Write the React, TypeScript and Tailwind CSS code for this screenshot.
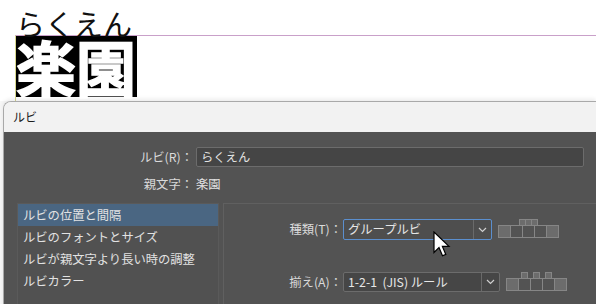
import React from "react";

const jp = { fontFamily: '"Noto Sans CJK JP", "Noto Sans", sans-serif' };

function Chevron() {
  return (
    <svg width="9" height="6" viewBox="0 0 9 6" className="block">
      <path d="M1 1 L4.5 4.5 L8 1" fill="none" stroke="#cfcfcf" strokeWidth="1.2" />
    </svg>
  );
}

function Box({ filled }: { filled?: boolean }) {
  return (
    <div
      className={`w-[13px] h-[13px] border border-[#868686] -ml-px first:ml-0 ${
        filled ? "bg-[#6c6c6c]" : "bg-[#535353]"
      }`}
    />
  );
}

function Small() {
  return <div className="w-[7px] h-[7px] border border-[#868686] bg-[#6c6c6c] -ml-px first:ml-0" />;
}

function GroupIcon() {
  return (
    <div className="flex flex-col">
      <div className="flex justify-center -mb-px">
        <Small />
        <Small />
        <Small />
      </div>
      <div className="flex">
        <Box filled />
        <Box />
        <Box />
        <Box />
        <Box filled />
      </div>
    </div>
  );
}

function JisIcon() {
  return (
    <div className="flex flex-col">
      <div className="flex pl-[15px] gap-[5px] -mb-px">
        <div className="w-[7px] h-[7px] border border-[#868686] bg-[#6c6c6c]" />
        <div className="w-[7px] h-[7px] border border-[#868686] bg-[#6c6c6c]" />
        <div className="w-[7px] h-[7px] border border-[#868686] bg-[#6c6c6c]" />
      </div>
      <div className="flex">
        <Box filled />
        <Box />
        <Box />
        <Box />
        <Box filled />
      </div>
    </div>
  );
}

export default function App() {
  const items = ["ルビの位置と間隔", "ルビのフォントとサイズ", "ルビが親文字より長い時の調整", "ルビカラー"];
  return (
    <div className="w-[596px] h-[304px] overflow-hidden bg-white relative" style={jp}>
      {/* Top document area */}
      <div className="h-[101px] bg-white">
        <div className="h-[35px] pl-[16px] flex items-end text-[29px] leading-[0.84] text-[#111]">
          らくえん
        </div>
        <div className="ml-[15px] h-[66px] border-t border-t-[#c9a0c9] border-l border-l-[#d8d890]">
          <div className="w-[121px] h-[61px] bg-black flex items-center text-white font-bold text-[60px] leading-none [-webkit-text-stroke:1.5px_white]">
            <span className="-mt-[2px]">楽園</span>
          </div>
        </div>
      </div>

      {/* Dialog */}
      <div className="pl-[3px] bg-[#f7f7f7]">
        <div className="rounded-tl-[8px] border-t border-l border-[#a9a9a9] overflow-hidden shadow-[0_-2px_4px_rgba(0,0,0,0.08)]">
          <div className="h-[30px] bg-[#f2f2f2] flex items-center pl-[9px] text-[12px] text-[#1b1b1b]">
            ルビ
          </div>
          <div className="bg-[#535353] h-[180px] text-[12.3px] text-[#dadada] pt-[15px]">
            <div className="flex items-center h-[20px]">
              <div className="w-[189px] text-right">ルビ(R)：</div>
              <div className="ml-[3px] w-[388px] h-[20px] bg-[#454545] border border-[#6c6c6c] rounded-[2px] flex items-center pl-[4px] text-[#e4e4e4]">
                らくえん
              </div>
            </div>
            <div className="flex items-center h-[20px] mt-[7px]">
              <div className="w-[189px] text-right">親文字：</div>
              <div className="ml-[3px] text-[#e4e4e4]">楽園</div>
            </div>
            <div className="flex mt-[9px] gap-[4px]">
              <div className="ml-[13px] w-[202px] h-[110px] border border-[#5a5a5a] bg-[#515151]">
                {items.map((t, i) => (
                  <div
                    key={t}
                    className={`h-[22px] flex items-center pl-[5px] text-[#e2e2e2] ${
                      i === 0 ? "bg-[#4a6682]" : ""
                    }`}
                  >
                    {t}
                  </div>
                ))}
              </div>
              <div className="flex-1 h-[110px] border-t border-l border-[#606060] pt-[15px]">
                <div className="flex items-center">
                  <div className="w-[118px] text-right">種類(T)：</div>
                  <div className="ml-[1px] w-[149px] h-[21px] border border-[#5b8fcf] rounded-[2px] bg-[#4e4e4e] flex">
                    <div className="flex-1 flex items-center pl-[4px] text-[#e6e6e6]">グループルビ</div>
                    <div className="w-[18px] border-l border-[#6a6a6a] flex items-center justify-center">
                      <Chevron />
                    </div>
                  </div>
                  <div className="ml-[6px] self-start">
                    <GroupIcon />
                  </div>
                </div>
                <div className="flex items-center mt-[32px]">
                  <div className="w-[118px] text-right">揃え(A)：</div>
                  <div className="ml-[1px] w-[157px] h-[20px] border border-[#6c6c6c] rounded-[2px] bg-[#464646] flex">
                    <div className="flex-1 flex items-center pl-[4px] text-[#e6e6e6] whitespace-pre">1-2-1  (JIS) ルール</div>
                    <div className="w-[18px] border-l border-[#6a6a6a] flex items-center justify-center">
                      <Chevron />
                    </div>
                  </div>
                  <div className="ml-[6px] -mt-[1px]">
                    <JisIcon />
                  </div>
                </div>
              </div>
            </div>
          </div>
        </div>
      </div>

      {/* Mouse cursor */}
      <svg className="absolute left-[433px] top-[231px]" width="18" height="27" viewBox="0 0 18 27">
        <path d="M1 1 L1 21.5 L6 16.6 L9.5 24.8 L12.8 23.4 L9.4 15.4 L16 15.4 Z" fill="#ffffff" stroke="#000000" strokeWidth="1.2" strokeLinejoin="miter" />
      </svg>
    </div>
  );
}
